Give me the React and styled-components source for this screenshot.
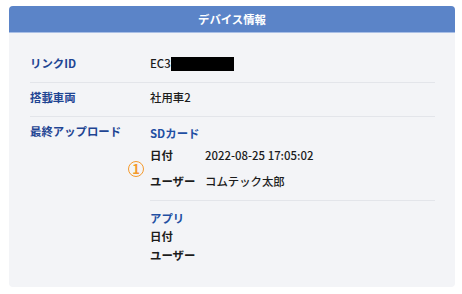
import React from "react";
import styled, { createGlobalStyle } from "styled-components";

const Global = createGlobalStyle`
  html, body { margin: 0; padding: 0; background: #ffffff; }
  body { font-family: "Noto Sans CJK JP", "Noto Sans", sans-serif; }
`;

const Page = styled.div`
  width: 462px;
  height: 294px;
  box-sizing: border-box;
  padding: 6px 7px 7px 9px;
`;

const Card = styled.section`
  background: #f3f4f7;
  border-radius: 4px;
  overflow: hidden;
  height: 281px;
  display: flex;
  flex-direction: column;
`;

const Header = styled.header`
  height: 26px;
  background: #5b84c8;
  border-bottom: 1px solid #a9bfe6;
  color: #ffffff;
  font-weight: 700;
  font-size: 11.4px;
  display: flex;
  align-items: center;
  justify-content: center;
`;

const Body = styled.div`
  padding: 16px 20px 13px 21px;
`;

const Row = styled.div`
  display: grid;
  grid-template-columns: 120px 1fr;
  padding: 5px 0 9px;
  border-bottom: ${(p) => (p.$last ? "none" : "1px solid #e3e5ea")};
  font-size: 11.4px;
  line-height: 19px;
`;

const Label = styled.div`
  color: #1f4593;
  font-weight: 700;
`;

const Value = styled.div`
  color: #1c1c1c;
  font-weight: 500;
  display: flex;
  align-items: center;
`;

const Redacted = styled.span`
  display: inline-block;
  width: 63px;
  height: 14px;
  background: #000;
`;

const Upload = styled.div`
  position: relative;
`;

const Section = styled.div`
  padding-top: ${(p) => p.$top}px;
`;

const SectionTitle = styled.div`
  color: #1f4fa3;
  font-weight: 700;
  line-height: 18px;
`;

const Pair = styled.div`
  display: grid;
  grid-template-columns: 55px 1fr;
  line-height: ${(p) => p.$h}px;
  color: #1c1c1c;
`;

const PairKey = styled.div`
  font-weight: 700;
`;

const PairVal = styled.div`
  font-weight: 500;
`;

const Divider = styled.div`
  height: 1px;
  background: #e3e5ea;
  margin-top: 6px;
`;

const Badge = styled.div`
  position: absolute;
  left: -22px;
  top: 39px;
  width: 16px;
  height: 16px;
  box-sizing: border-box;
  border: 1.7px solid #f39a2e;
  border-radius: 50%;
  color: #f39a2e;
  font-size: 13px;
  font-weight: 700;
  line-height: 13px;
  text-align: center;
`;

export default function App() {
  return (
    <>
      <Global />
      <Page>
        <Card>
          <Header>デバイス情報</Header>
          <Body>
            <Row>
              <Label>リンクID</Label>
              <Value>
                EC3<Redacted />
              </Value>
            </Row>
            <Row>
              <Label>搭載車両</Label>
              <Value>社用車2</Value>
            </Row>
            <Row $last>
              <Label>最終アップロード</Label>
              <Upload>
                <Section $top={2}>
                  <SectionTitle>SDカード</SectionTitle>
                  <Pair $h={26}>
                    <PairKey>日付</PairKey>
                    <PairVal>2022-08-25 17:05:02</PairVal>
                  </Pair>
                  <Pair $h={26}>
                    <PairKey>ユーザー</PairKey>
                    <PairVal>コムテック太郎</PairVal>
                  </Pair>
                  <Badge>1</Badge>
                </Section>
                <Divider />
                <Section $top={8}>
                  <SectionTitle>アプリ</SectionTitle>
                  <Pair $h={19}>
                    <PairKey>日付</PairKey>
                    <PairVal />
                  </Pair>
                  <Pair $h={19}>
                    <PairKey>ユーザー</PairKey>
                    <PairVal />
                  </Pair>
                </Section>
              </Upload>
            </Row>
          </Body>
        </Card>
      </Page>
    </>
  );
}
